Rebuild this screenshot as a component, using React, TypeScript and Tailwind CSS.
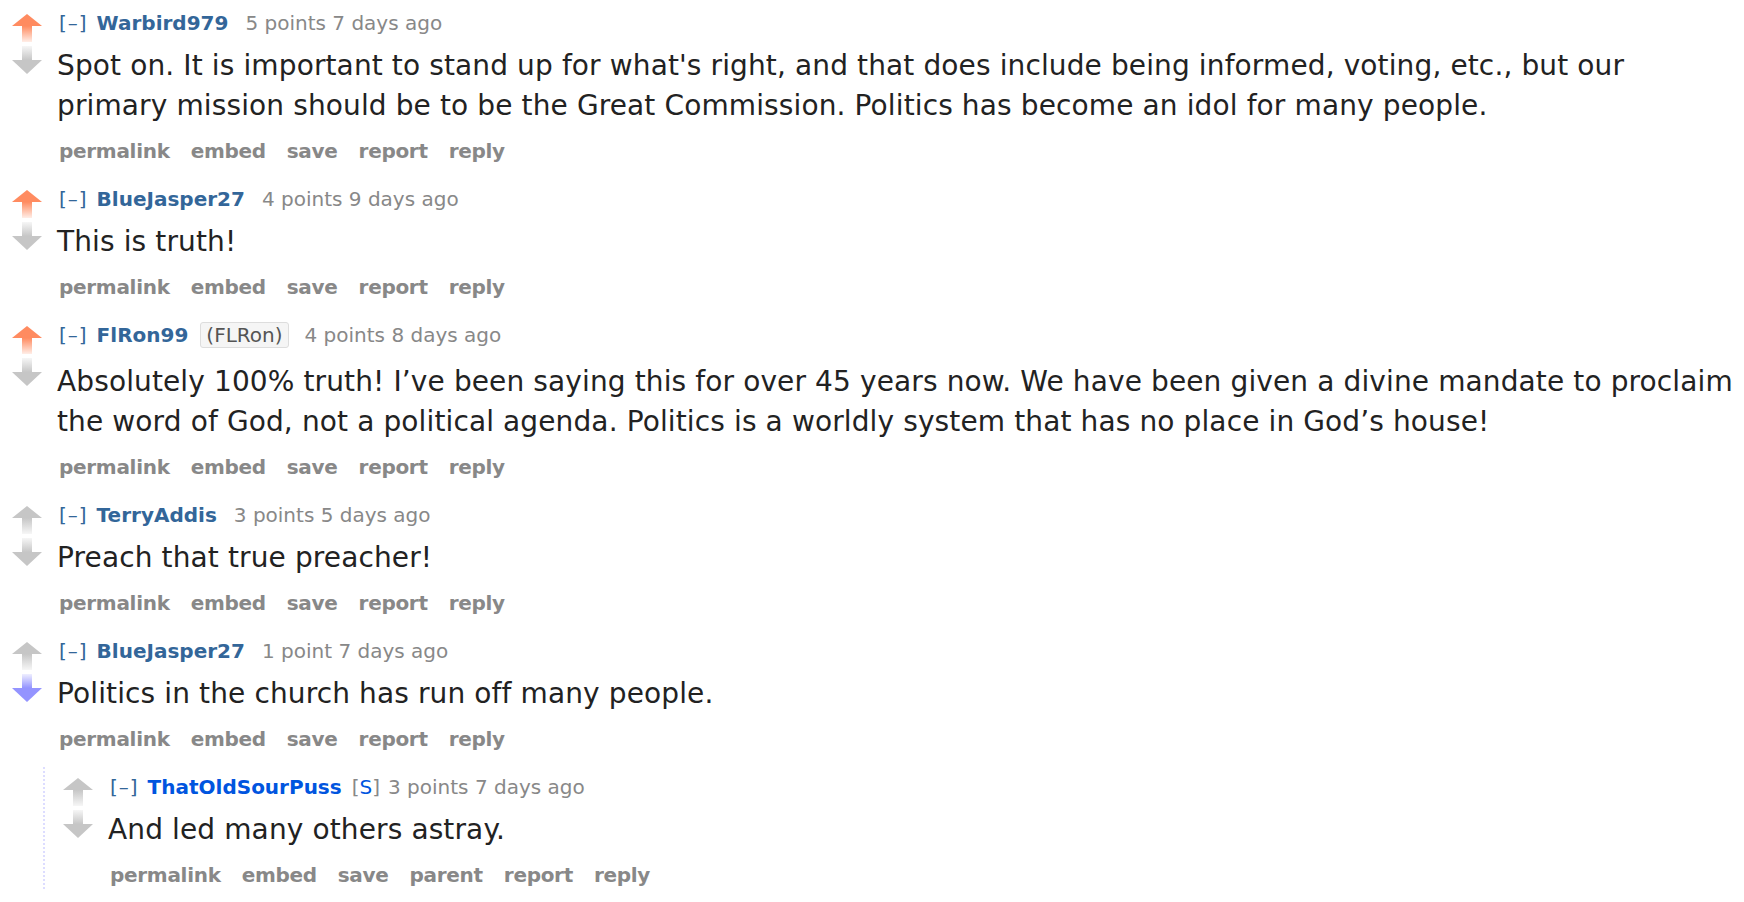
import React from 'react';

type Vote = 'up' | 'down' | 'none';

type CommentData = {
  author: string;
  submitter?: boolean;
  flair?: string;
  score: string;
  age: string;
  vote: Vote;
  lines: string[];
  buttons: string[];
  children?: CommentData[];
};

const UP = '#ff8b60';
const DOWN = '#9494ff';
const GRAY = '#c6c6c6';

function Arrow({ dir, color }: { dir: 'up' | 'down'; color: string }) {
  const id = `g-${dir}-${color.replace('#', '')}`;
  if (dir === 'up') {
    return (
      <svg width="30" height="28" viewBox="0 0 30 28" className="block">
        <defs>
          <linearGradient id={id} x1="0" y1="0" x2="0" y2="1">
            <stop offset="0" stopColor={color} stopOpacity="1" />
            <stop offset="1" stopColor={color} stopOpacity="0.15" />
          </linearGradient>
        </defs>
        <polygon points="0,12 15,0 30,12" fill={color} />
        <rect x="10" y="12" width="10" height="16" fill={`url(#${id})`} />
      </svg>
    );
  }
  return (
    <svg width="30" height="28" viewBox="0 0 30 28" className="block">
      <defs>
        <linearGradient id={id} x1="0" y1="0" x2="0" y2="1">
          <stop offset="0" stopColor={color} stopOpacity="0.15" />
          <stop offset="1" stopColor={color} stopOpacity="1" />
        </linearGradient>
      </defs>
      <rect x="10" y="0" width="10" height="14" fill={`url(#${id})`} />
      <polygon points="0,14 30,14 15,28" fill={color} />
    </svg>
  );
}

const comments: CommentData[] = [
  {
    author: 'Warbird979',
    score: '5 points',
    age: '7 days ago',
    vote: 'up',
    lines: [
      "Spot on. It is important to stand up for what's right, and that does include being informed, voting, etc., but our",
      'primary mission should be to be the Great Commission. Politics has become an idol for many people.',
    ],
    buttons: ['permalink', 'embed', 'save', 'report', 'reply'],
  },
  {
    author: 'BlueJasper27',
    score: '4 points',
    age: '9 days ago',
    vote: 'up',
    lines: ['This is truth!'],
    buttons: ['permalink', 'embed', 'save', 'report', 'reply'],
  },
  {
    author: 'FlRon99',
    flair: '(FLRon)',
    score: '4 points',
    age: '8 days ago',
    vote: 'up',
    lines: [
      'Absolutely 100% truth! I\u2019ve been saying this for over 45 years now. We have been given a divine mandate to proclaim',
      'the word of God, not a political agenda. Politics is a worldly system that has no place in God\u2019s house!',
    ],
    buttons: ['permalink', 'embed', 'save', 'report', 'reply'],
  },
  {
    author: 'TerryAddis',
    score: '3 points',
    age: '5 days ago',
    vote: 'none',
    lines: ['Preach that true preacher!'],
    buttons: ['permalink', 'embed', 'save', 'report', 'reply'],
  },
  {
    author: 'BlueJasper27',
    score: '1 point',
    age: '7 days ago',
    vote: 'down',
    lines: ['Politics in the church has run off many people.'],
    buttons: ['permalink', 'embed', 'save', 'report', 'reply'],
    children: [
      {
        author: 'ThatOldSourPuss',
        submitter: true,
        score: '3 points',
        age: '7 days ago',
        vote: 'none',
        lines: ['And led many others astray.'],
        buttons: ['permalink', 'embed', 'save', 'parent', 'report', 'reply'],
      },
    ],
  },
];

function Comment({ c }: { c: CommentData }) {
  return (
    <div>
      <div className="flex">
        {/* vote arrows */}
        <div className="w-[30px] shrink-0 mt-[5px] flex flex-col gap-[4px]">
          <Arrow dir="up" color={c.vote === 'up' ? UP : GRAY} />
          <Arrow dir="down" color={c.vote === 'down' ? DOWN : GRAY} />
        </div>

        <div className="ml-[17px] min-w-0">
          {/* tagline */}
          <div className="flex items-center h-[28px] text-[20px] whitespace-nowrap">
            <span className="text-[#336699] tracking-[1px]">[–]</span>
            <span
              className={
                'ml-[9px] font-bold ' + (c.submitter ? 'text-[#0055df]' : 'text-[#336699]')
              }
            >
              {c.author}
            </span>
            {c.submitter && (
              <span className="ml-[10px] text-[#888]">
                [<span className="text-[#0055df]">S</span>]
              </span>
            )}
            {c.flair && (
              <span className="ml-[12px] h-[26px] px-[5px] flex items-center rounded-[3px] border border-[#dddddd] bg-[#f5f5f5] text-[#545454]">
                {c.flair}
              </span>
            )}
            <span className={(c.flair ? 'ml-[16px]' : c.submitter ? 'ml-[8px]' : 'ml-[17px]') + ' text-[#888]'}>
              {c.score} {c.age}
            </span>
          </div>

          {/* body */}
          <div
            className={
              (c.flair ? 'mt-[13px]' : 'mt-[9px]') +
              ' -ml-[2px] text-[28px] leading-[40px] tracking-[0.12px] text-[#222] whitespace-nowrap'
            }
          >
            {c.lines.map((l, i) => (
              <div key={i}>{l}</div>
            ))}
          </div>

          {/* buttons */}
          <ul className="mt-[11px] flex h-[28px] items-center gap-[21px] text-[20px] font-bold tracking-[-0.3px] text-[#888]">
            {c.buttons.map((b) => (
              <li key={b}>{b}</li>
            ))}
          </ul>
        </div>
      </div>

      {c.children && (
        <div className="ml-[31px] mt-[14px] border-l-2 border-dotted border-[#ddddff] pl-[18px] pt-[6px]">
          {c.children.map((ch, i) => (
            <Comment key={i} c={ch} />
          ))}
        </div>
      )}
    </div>
  );
}

export default function App() {
  return (
    <div
      className="min-h-screen bg-white pl-[12px] pt-[9px] overflow-hidden"
      style={{ fontFamily: '"DejaVu Sans", Verdana, sans-serif' }}
    >
      <div className="flex flex-col gap-[20px]">
        {comments.map((c, i) => (
          <Comment key={i} c={c} />
        ))}
      </div>
    </div>
  );
}
